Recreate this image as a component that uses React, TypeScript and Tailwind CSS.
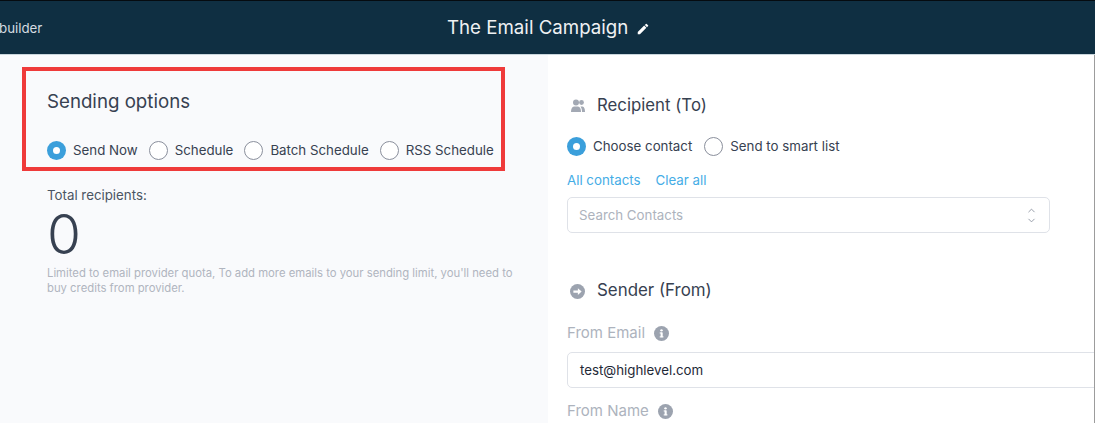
import React from "react";
import { ChevronUp, ChevronDown } from "lucide-react";

const font = { fontFamily: "Inter, 'Liberation Sans', sans-serif" };

function Radio({ on, label, className = "" }: { on?: boolean; label: string; className?: string }) {
  return (
    <div className={`flex shrink-0 items-center ${className}`}>
      {on ? (
        <span className="flex h-[19px] w-[19px] shrink-0 items-center justify-center rounded-full bg-[#3b9fdb]">
          <span className="h-[7px] w-[7px] rounded-full bg-white" />
        </span>
      ) : (
        <span className="h-[19px] w-[19px] shrink-0 rounded-full border border-[#8a8f9c] bg-white" />
      )}
      <span className="ml-[7px] whitespace-nowrap text-[13.3px] leading-5 text-[#374151]">{label}</span>
    </div>
  );
}

function Info() {
  return (
    <svg width="15" height="15" viewBox="0 0 20 20" className="ml-[9px]">
      <circle cx="10" cy="10" r="10" fill="#9ca3af" />
      <rect x="8.8" y="8.6" width="2.8" height="6.4" fill="#fff" />
      <rect x="7.6" y="8.6" width="3" height="1.4" fill="#fff" />
      <rect x="7.6" y="13.8" width="5" height="1.4" fill="#fff" />
      <circle cx="10" cy="5.8" r="1.6" fill="#fff" />
    </svg>
  );
}

export default function App() {
  return (
    <div className="flex h-[423px] w-[1095px] flex-col overflow-hidden bg-white" style={font}>
      <header className="flex h-[55px] shrink-0 items-center border-t border-b border-t-[#050b10] border-b-[#c9d6dc] bg-[#0f2f42] pt-[2px]">
        <span className="-ml-px w-[448px] text-[13.3px] text-[#d5dbe0]">builder</span>
        <span className="text-[18.7px] text-[#eef1f3]">The Email Campaign</span>
        <svg width="14" height="14" viewBox="0 0 24 24" fill="#fff" className="ml-[8px]">
          <path d="M3 17.25V21h3.75L17.81 9.94l-3.75-3.75L3 17.25zM20.71 7.04a1 1 0 0 0 0-1.41l-2.34-2.34a1 1 0 0 0-1.41 0l-1.83 1.83 3.75 3.75 1.83-1.83z" />
        </svg>
      </header>
      <div className="flex min-h-0 flex-1">
        <aside className="w-[548px] shrink-0 bg-[#f9fafc]">
          <section className="ml-[22px] mt-[12px] h-[104px] w-[483px] border-4 border-[#ef3a3a] pl-[21px] pt-[17px]">
            <h2 className="text-[18.7px] leading-7 text-[#374151]">Sending options</h2>
            <div className="mt-[24px] flex">
              <Radio on label="Send Now" />
              <Radio label="Schedule" className="ml-[11px]" />
              <Radio label="Batch Schedule" className="ml-[11px]" />
              <Radio label="RSS Schedule" className="ml-[11px]" />
            </div>
          </section>
          <div className="ml-[47px] mt-[14px] w-[475px]">
            <p className="text-[13.3px] leading-5 text-[#4b5563]">Total recipients:</p>
            <p className="mt-[4px] text-[55px] font-light leading-[50px] text-[#374151]">0</p>
            <p className="mt-[7px] text-[11.3px] leading-[15px] text-[#b0b5bf]">
              Limited to email provider quota, To add more emails to your sending limit, you'll need to buy credits from provider.
            </p>
          </div>
        </aside>
        <main className="min-w-0 flex-1 overflow-hidden border-r border-[#9c9c9c] pl-[19px] pt-[39px]">
          <h3 className="flex h-[24px] items-center pl-[3px] text-[16.8px] text-[#374151]">
            <svg width="16" height="14" viewBox="0 0 16 14" fill="#a3a9b4" className="mr-[11px]">
              <circle cx="6" cy="3.5" r="3" />
              <path d="M1 13c0-3.5 1-5 3-5.5h4c2 .5 3 2 3 5.5z" />
              <circle cx="11.5" cy="3.5" r="2.4" />
              <path d="M12 13c0-2.6-.5-4-1.500-5.500h2c1.800.5 2.500 2.300 2.500 5.500z" />
            </svg>
            Recipient (To)
          </h3>
          <div className="mt-[18px] flex">
            <Radio on label="Choose contact" />
            <Radio label="Send to smart list" className="ml-[12px]" />
          </div>
          <div className="mt-[14px] flex text-[13.3px] leading-5 text-[#45ade6]">
            <span>All contacts</span>
            <span className="ml-[15px]">Clear all</span>
          </div>
          <div className="mt-[7px] flex h-[36px] w-[483px] items-center justify-between rounded-[5px] border border-[#dfe2e8] bg-white pl-[11px] pr-[12px] pt-[1px] text-[13.3px] text-[#adb3bd]">
            <span>Search Contacts</span>
            <span className="flex flex-col text-[#8f96a3]">
              <ChevronUp size={11} className="-mb-[1px]" />
              <ChevronDown size={11} />
            </span>
          </div>
          <h3 className="mt-[46px] flex h-[24px] items-center pl-[3px] text-[16.9px] text-[#374151]">
            <svg width="15" height="15" viewBox="0 0 20 20" className="mr-[12px]">
              <circle cx="10" cy="10" r="10" fill="#9ca3af" />
              <path d="M4.500 8.500h6V5.500L15.500 10l-5 4.500v-3h-6z" fill="#fff" />
            </svg>
            Sender (From)
          </h3>
          <div className="mt-[20px] flex h-5 items-center text-[15px] text-[#adb3bd]">
            From Email
            <Info />
          </div>
          <div className="mt-[9px] flex h-[36px] w-[540px] items-center rounded-[5px] border border-[#dfe2e8] bg-white pl-[12px] pt-[1px] text-[13.3px] text-[#1f2937]">
            test@highlevel.com
          </div>
          <div className="mt-[13px] flex h-5 items-center text-[15px] text-[#adb3bd]">
            From Name
            <Info />
          </div>
        </main>
      </div>
    </div>
  );
}
